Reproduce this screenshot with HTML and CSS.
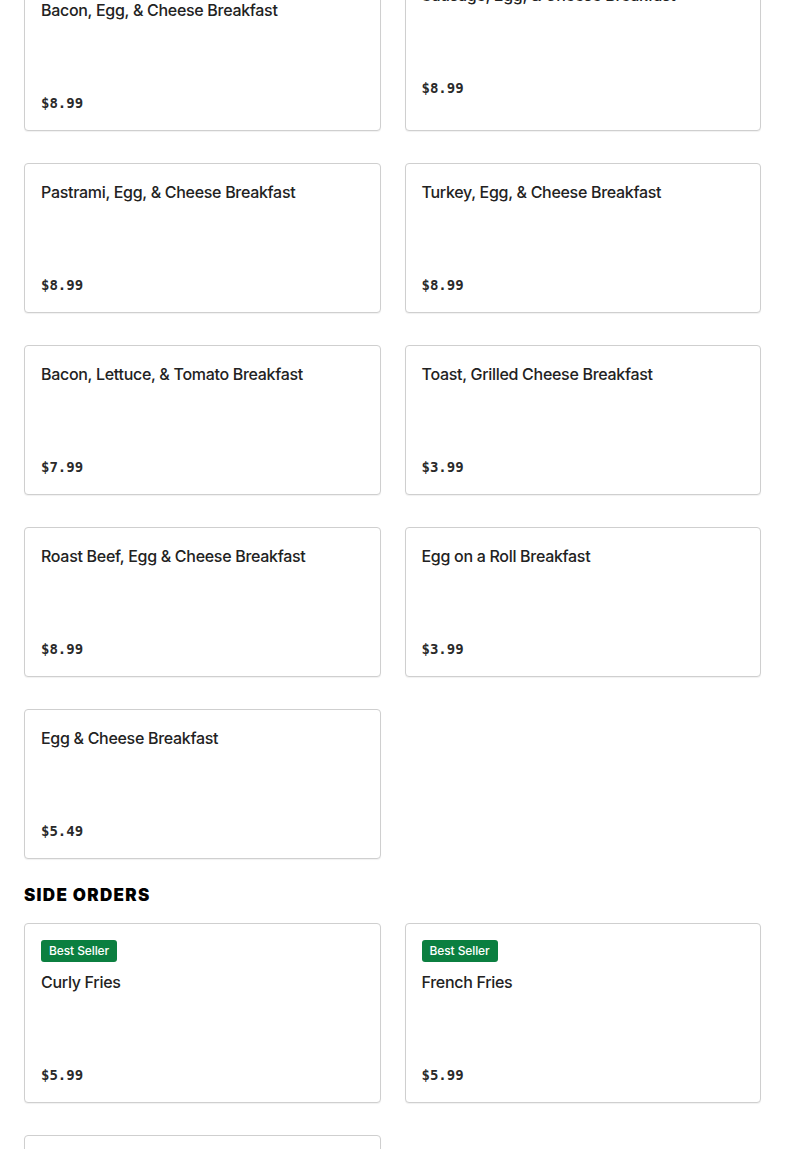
FILE: index.html
```html
<!DOCTYPE html>
<html lang="en">
<head>
<meta charset="utf-8">
<title>Menu</title>
<link rel="stylesheet" href="styles.css">
</head>
<body>
<main class="menu">
  <section class="section">
    <div class="grid">
      <article class="card">
        <span class="badge">Best Seller</span>
        <h3 class="card-title">Bacon, Egg, &amp; Cheese Breakfast</h3>
        <p class="card-price">$8.99</p>
      </article>
      <article class="card">
        <div class="card-flag"></div>
        <h3 class="card-title">Sausage, Egg, &amp; Cheese Breakfast</h3>
        <p class="card-price">$8.99</p>
      </article>
      <article class="card">
        <h3 class="card-title">Pastrami, Egg, &amp; Cheese Breakfast</h3>
        <p class="card-price">$8.99</p>
      </article>
      <article class="card">
        <h3 class="card-title">Turkey, Egg, &amp; Cheese Breakfast</h3>
        <p class="card-price">$8.99</p>
      </article>
      <article class="card">
        <h3 class="card-title">Bacon, Lettuce, &amp; Tomato Breakfast</h3>
        <p class="card-price">$7.99</p>
      </article>
      <article class="card">
        <h3 class="card-title">Toast, Grilled Cheese Breakfast</h3>
        <p class="card-price">$3.99</p>
      </article>
      <article class="card">
        <h3 class="card-title">Roast Beef, Egg &amp; Cheese Breakfast</h3>
        <p class="card-price">$8.99</p>
      </article>
      <article class="card">
        <h3 class="card-title">Egg on a Roll Breakfast</h3>
        <p class="card-price">$3.99</p>
      </article>
      <article class="card">
        <h3 class="card-title">Egg &amp; Cheese Breakfast</h3>
        <p class="card-price">$5.49</p>
      </article>
    </div>
  </section>
  <section class="section">
    <h2 class="section-title">SIDE ORDERS</h2>
    <div class="grid">
      <article class="card">
        <span class="badge">Best Seller</span>
        <h3 class="card-title">Curly Fries</h3>
        <p class="card-price">$5.99</p>
      </article>
      <article class="card">
        <span class="badge">Best Seller</span>
        <h3 class="card-title">French Fries</h3>
        <p class="card-price">$5.99</p>
      </article>
      <article class="card">
        <span class="badge">Best Seller</span>
        <h3 class="card-title">Onion Rings</h3>
        <p class="card-price">$5.99</p>
      </article>
    </div>
  </section>
</main>
</body>
</html>
```

FILE: styles.css
```css
html, body {
  margin: 0;
  padding: 0;
  background: #ffffff;
}

body {
  font-family: "Inter", "Noto Sans", sans-serif;
  color: #1f1f1f;
  overflow: hidden;
}

.menu {
  margin-top: -49px;
  padding: 0 24px;
}

.grid {
  display: grid;
  grid-template-columns: 1fr 1fr;
  column-gap: 24px;
  row-gap: 32px;
  align-items: start;
}

.card {
  box-sizing: border-box;
  min-height: 150px;
  border: 1px solid #cfcfcf;
  border-radius: 4px;
  padding: 16px;
  display: flex;
  flex-direction: column;
  align-items: flex-start;
  background: #fff;
  box-shadow: 0 1px 1px rgba(0, 0, 0, 0.06);
}

.grid > .card:nth-child(1),
.grid > .card:nth-child(2) {
  min-height: 180px;
}

.card-flag {
  height: 15px;
}

.badge {
  display: inline-block;
  height: 22px;
  line-height: 22px;
  padding: 0 8px;
  margin-bottom: 8px;
  border-radius: 3px;
  background: #0b7f40;
  color: #ffffff;
  font-size: 12px;
  font-weight: 500;
  letter-spacing: -0.1px;
}

.card-title {
  margin: 0 0 70px;
  font-size: 16px;
  line-height: 24px;
  font-weight: 500;
  letter-spacing: -0.3px;
  color: #222;
}

.card-price {
  margin: 0;
  font-family: "DejaVu Sans Mono", "Liberation Mono", monospace;
  font-size: 14px;
  line-height: 22px;
  font-weight: 700;
  color: #2a2a2a;
}

.section-title {
  margin: 22px 0 14px;
  font-size: 17px;
  line-height: 28px;
  font-weight: 900;
  letter-spacing: 1.3px;
  color: #000;
}
```
